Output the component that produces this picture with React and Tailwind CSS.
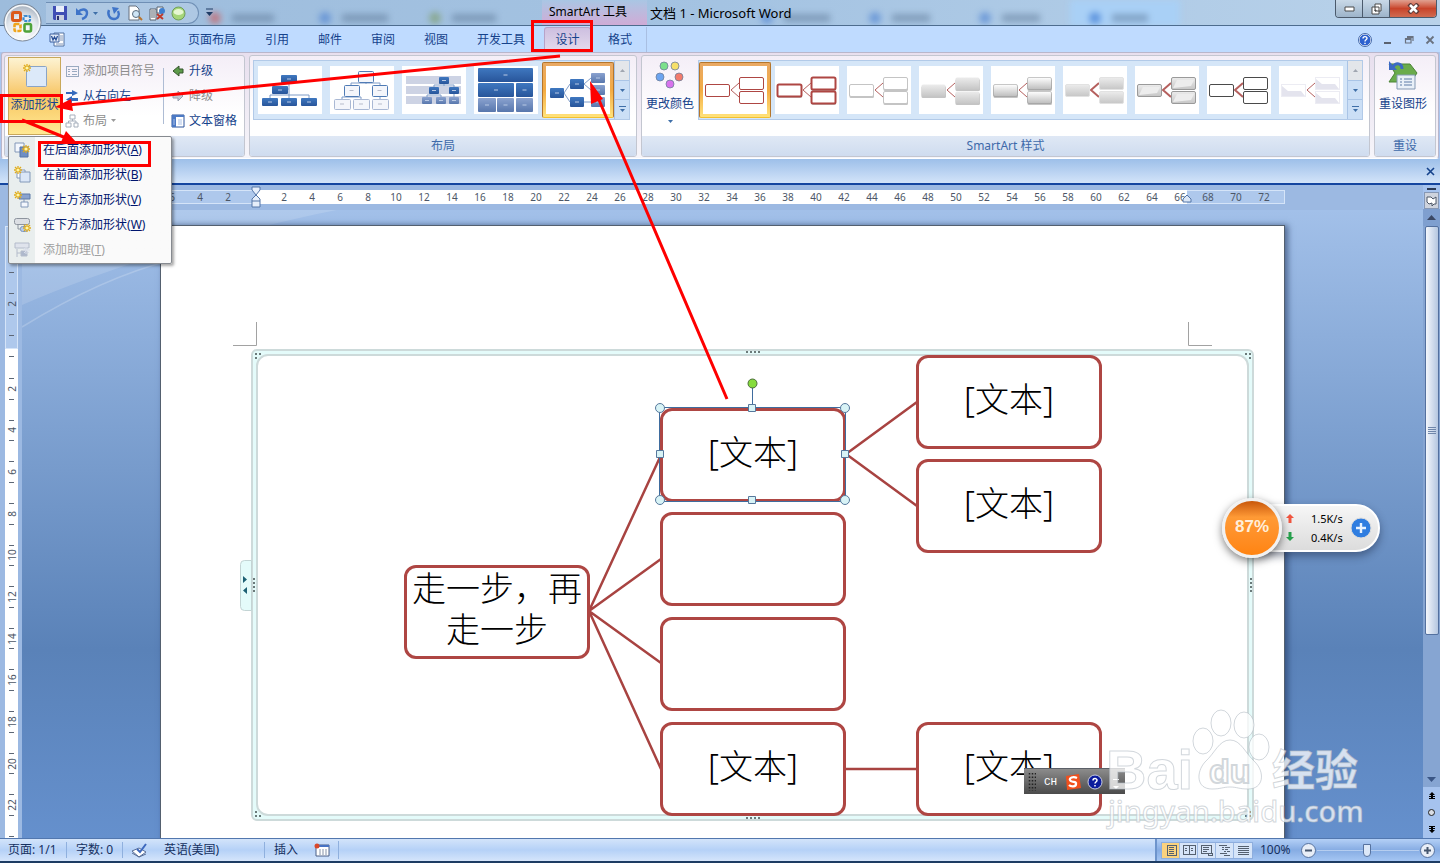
import { useState } from "react";

const ribbonTabs = ["开始", "插入", "页面布局", "引用", "邮件", "审阅", "视图", "开发工具"];

const blurredTabs = [
  { x: 208, color: "#d0504e", w: 42 },
  { x: 318, color: "#4a7fd0", w: 46 },
  { x: 428, color: "#7a9a60", w: 44 },
  { x: 760, color: "#4a7fd0", w: 46 },
  { x: 868, color: "#4a7fd0", w: 38 },
  { x: 978, color: "#4a7fd0", w: 38 },
  { x: 1088, color: "#2f6fd0", w: 36 },
];

const menuItems = [
  { text: "在后面添加形状", hotkey: "A", kind: "after" },
  { text: "在前面添加形状", hotkey: "B", kind: "before" },
  { text: "在上方添加形状", hotkey: "V", kind: "above" },
  { text: "在下方添加形状", hotkey: "W", kind: "below" },
  { text: "添加助理", hotkey: "T", kind: "assistant", disabled: true },
];

const layoutThumbs = [
  {
    lines: "M31 17V32M12 32V29H51V32M31 23H26",
    boxes: [
      [23, 9, 16, 8],
      [14, 20, 16, 8],
      [4, 32, 16, 8],
      [23, 32, 16, 8],
      [43, 32, 16, 8],
    ],
  },
  {
    outlined: true,
    lines: "M36 16V18M21 19V17H50V19M12 33V31H31V33M21 30V31M50 30V33",
    boxes: [
      [28, 5, 15, 11],
      [14, 19, 15, 11],
      [42, 19, 15, 11],
      [4, 33, 16, 10],
      [23, 33, 16, 10],
      [42, 33, 16, 10],
    ],
  },
  {
    bands: true,
    lines: "M42 18V20M32 21V19H52V21M25 31V29H39V31M52 28V31",
    boxes: [
      [37, 11, 10, 7],
      [27, 21, 10, 7],
      [47, 21, 10, 7],
      [20, 31, 10, 7, 1],
      [34, 31, 10, 7, 1],
      [47, 31, 10, 7, 1],
    ],
  },
  {
    lines: "",
    boxes: [
      [4, 2, 55, 14],
      [4, 17, 36, 14],
      [42, 17, 17, 14],
      [4, 32, 18, 14, 1],
      [23, 32, 17, 14, 1],
      [42, 32, 17, 14, 1],
    ],
  },
  {
    selected: true,
    lines: "M18 27L24 18M18 27L24 36M38 18L45 12M38 18L45 24M38 36H45",
    boxes: [
      [4, 22, 14, 10],
      [24, 13, 14, 10],
      [24, 31, 14, 10],
      [45, 7, 14, 10, 1],
      [45, 19, 14, 10, 1],
      [45, 31, 14, 10, 1],
    ],
  },
];

const styleThumbs = [
  { stroke: "#ae4643", fill: "#fff", width: 1, selected: true },
  { stroke: "#ae4643", fill: "#fff", width: 2, shadow: true },
  { stroke: "#c4c4c4", fill: "#fff", width: 1, shadow: true },
  { stroke: "none", fill: "url(#grey)", width: 0, shadow: true },
  { stroke: "#8e8e8e", fill: "url(#gloss)", width: 0.5, shadow: true },
  { stroke: "#e2e2e2", fill: "url(#grey)", width: 1, bold: true },
  { stroke: "#9a9a9a", fill: "url(#grey)", width: 1, bold: true, inner: true },
  { stroke: "#4a4a4a", fill: "#fff", width: 1, bold: true },
  { stroke: "#ececf3", fill: "#fff", width: 1, bevel: true },
];

const nodes = [
  { x: 243, y: 339, text: "走一步，再走一步" },
  { x: 499, y: 182, text: "[文本]", selected: true },
  { x: 499, y: 286, text: "" },
  { x: 499, y: 391, text: "" },
  { x: 499, y: 496, text: "[文本]" },
  { x: 755, y: 129, text: "[文本]" },
  { x: 755, y: 233, text: "[文本]" },
  { x: 755, y: 496, text: "[文本]" },
];

const rulerNumbers = Array.from({ length: 33 }, (_, i) => (i + 1) * 2);
const verticalNumbers = Array.from({ length: 11 }, (_, i) => (i + 1) * 2);

const Star = ({ x, y }) => (
  <g transform={`translate(${x} ${y})`}>
    <path d="M0 -4V4M-4 0H4M-3 -3L3 3M3 -3L-3 3" stroke="#e0ac1c" strokeWidth="1.3" />
    <circle r="1.6" fill="#fff6a8" />
  </g>
);

const Caret = ({ className = "fill-[#3f6fa8]" }) => (
  <svg width="5" height="3" viewBox="0 0 5 3" className={className}>
    <path d="M0 0H5L2.5 3Z" />
  </svg>
);

const OfficeButton = () => (
  <button aria-label="Office" className="absolute left-[3px] top-[3px] z-10">
    <svg width="39" height="39" viewBox="0 0 39 39">
      <defs>
        <radialGradient id="orb" cx="50%" cy="75%" r="70%">
          <stop offset="0" stopColor="#ffffff" />
          <stop offset="0.6" stopColor="#e3e8ee" />
          <stop offset="1" stopColor="#a9b3c0" />
        </radialGradient>
      </defs>
      <circle cx="19.5" cy="19.5" r="18.5" fill="url(#orb)" stroke="#7c8796" />
      <circle cx="19.5" cy="19.5" r="17" fill="none" stroke="#f7f9fb" strokeWidth="1.5" />
      <g fill="none" strokeWidth="3">
        <rect x="9.5" y="9.500" width="8" height="8" rx="1.500" stroke="#dc5a1a" />
        <rect x="20.500" y="13" width="6.500" height="5" rx="1" stroke="#3b8ad0" strokeWidth="2.200" strokeDasharray="3 1" />
        <rect x="11.500" y="21" width="6" height="7" rx="1" stroke="#efa51c" strokeWidth="2.600" strokeDasharray="4 1" />
        <rect x="21.500" y="21" width="6.500" height="7.500" rx="1.500" stroke="#4ea33a" strokeWidth="2.600" />
      </g>
    </svg>
  </button>
);

const QuickAccess = () => (
  <div className="ml-[46px] flex h-[22px] w-[153px] items-center rounded-r-full border border-l-0 border-[#6f8fb5] bg-[#b9cfe8]/60 pl-[6px]">
    <button aria-label="保存">
      <svg width="16" height="16" viewBox="0 0 16 16">
        <path d="M1 1H15V15H2L1 14Z" fill="#3f4db4" />
        <path d="M4 1H12V7H4Z" fill="#e9eefa" />
        <path d="M4 10H12V15H4Z" fill="#c9cfdf" />
        <path d="M5 11H7V15H5Z" fill="#2a3070" />
      </svg>
    </button>
    <button aria-label="撤销" className="ml-[7px]">
      <svg width="15" height="15" viewBox="0 0 15 15">
        <path d="M3 6C7 2 12 3 12 7C12 10 10 12 7 13" fill="none" stroke="#3f74c8" strokeWidth="2.4" />
        <path d="M1 2V9H8Z" fill="#3f74c8" />
      </svg>
    </button>
    <button aria-label="撤销列表" className="ml-[3px]">
      <Caret />
    </button>
    <button aria-label="重复" className="ml-[8px]">
      <svg width="15" height="15" viewBox="0 0 15 15">
        <path d="M3 4C1 9 4 13 8 13C12 13 14 9 12 5" fill="none" stroke="#3f74c8" strokeWidth="2.4" />
        <path d="M6 1L13 2L8 8Z" fill="#3f74c8" />
      </svg>
    </button>
    <button aria-label="打印预览" className="ml-[7px]">
      <svg width="15" height="16" viewBox="0 0 15 16">
        <path d="M1 1H8L11 4V15H1Z" fill="#fff" stroke="#66707e" />
        <circle cx="8" cy="9" r="3.5" fill="#cfe5f5" stroke="#5b6b7c" />
        <path d="M11 12L14 15" stroke="#b9752f" strokeWidth="2" />
      </svg>
    </button>
    <button aria-label="编辑" className="ml-[6px]">
      <svg width="17" height="16" viewBox="0 0 17 16">
        <path d="M1 4H7V15H1ZM8 2H14V8H8Z" fill="#fff" stroke="#59636f" />
        <path d="M2 6H6M2 8H6M2 10H6M2 12H6" stroke="#59636f" />
        <circle cx="13" cy="6" r="3" fill="#3f7fd0" />
        <path d="M8 9L14 14M14 9L8 14" stroke="#c03a2c" strokeWidth="2" />
      </svg>
    </button>
    <button aria-label="完成" className="ml-[5px]">
      <svg width="15" height="15" viewBox="0 0 15 15">
        <circle cx="7.5" cy="7.5" r="6.5" fill="#a6d67a" stroke="#6f9f58" />
        <ellipse cx="7.5" cy="6" rx="5" ry="3" fill="#e6f7d2" />
      </svg>
    </button>
  </div>
);

const TitleBar = () => (
  <header className="relative flex h-[26px] shrink-0 items-start overflow-hidden border-b border-[#4d6c8e] bg-linear-to-r from-[#9dbcdc] via-[#a4c3e2] to-[#b9d2ea] pt-[2px]">
    <div aria-hidden="true" className="absolute inset-0 blur-[3px]">
      <svg width="100%" height="26">
        <path d="M1070 0H1180V26H1070Z" fill="#a9d0f6" />
        {blurredTabs.map((tab) => (
          <g key={tab.x}>
            <circle cx={tab.x + 7} cy="18" r="6" fill={tab.color} opacity="0.6" />
            <path d={`M${tab.x + 24} 18h${tab.w}`} stroke="#55708f" strokeWidth="8" opacity="0.45" />
          </g>
        ))}
      </svg>
    </div>
    <QuickAccess />
    <button aria-label="自定义快速访问工具栏" className="relative ml-[7px] mt-[6px]">
      <svg width="7" height="8" viewBox="0 0 7 8">
        <path d="M0 1H7" stroke="#1e3c66" />
        <path d="M0 4H7L3.5 8Z" fill="#1e3c66" />
      </svg>
    </button>
    <div className="relative -mt-[2px] ml-[329px] h-[25px] w-[105px] bg-linear-to-b from-[#a9c6e4] to-[#cfabd6] pl-[7px] text-[12px] leading-6 whitespace-nowrap text-black">
      SmartArt 工具
    </div>
    <h1 className="relative -mt-[1px] ml-[3px] text-[13px] leading-6 whitespace-nowrap text-black">文档 1 - Microsoft Word</h1>
    <div className="relative -mt-[2px] mr-[3px] ml-auto flex h-[18px] overflow-hidden rounded-b-[4px] border border-t-0 border-[#4b5a6c]">
      <button aria-label="最小化" className="flex w-[27px] items-center justify-center border-r border-[#4b5a6c] bg-linear-to-b from-[#c9d9e8] to-[#9db4ca]">
        <svg width="11" height="6">
          <path d="M1 1H10V5H1Z" fill="#fff" stroke="#4a4a4a" />
        </svg>
      </button>
      <button aria-label="向下还原" className="flex w-[27px] items-center justify-center border-r border-[#4b5a6c] bg-linear-to-b from-[#c9d9e8] to-[#9db4ca]">
        <svg width="11" height="12">
          <path d="M4 1H10V8H4ZM1 4H8V11H1Z" fill="#fff" stroke="#4a4a4a" />
          <path d="M4 7H5V8H4Z" stroke="#4a4a4a" />
        </svg>
      </button>
      <button aria-label="关闭" className="flex w-[46px] items-center justify-center bg-linear-to-b from-[#e0a090] via-[#c8432a] to-[#d06a50]">
        <svg width="13" height="11" viewBox="0 0 13 11">
          <path d="M2 1L11 10M11 1L2 10" stroke="#5c3a38" strokeWidth="4.4" />
          <path d="M3 2L10 9M10 2L3 9" stroke="#fff" strokeWidth="2.6" />
        </svg>
      </button>
    </div>
  </header>
);

const TabRow = () => (
  <nav className="flex h-[26px] shrink-0 items-center bg-[#bfdbff] pt-[1px] text-[#15428b]">
    <a href="#word" aria-label="Word" className="ml-[49px]">
      <svg width="16" height="16" viewBox="0 0 16 16">
        <path d="M5 1H15V14H5Z" fill="#fff" stroke="#5070a0" />
        <path d="M11 4H14M11 6H14M11 8H14M7 12H14" stroke="#7f94b8" />
        <path d="M1 2H10V10H1Z" fill="#e3ecf8" stroke="#3a5f9e" />
        <path d="M2.500 4L4 8L5.500 5L7 8L8.500 4" fill="none" stroke="#2a4f96" strokeWidth="1.300" />
      </svg>
    </a>
    <div className="ml-[17px] flex gap-[29px]">
      {ribbonTabs.map((tab) => (
        <a key={tab} href="#tab" className="whitespace-nowrap">
          {tab}
        </a>
      ))}
    </div>
    <a href="#design" className="ml-[19px] flex h-[25px] w-[47px] items-center justify-center self-end rounded-t-[3px] border border-b-0 border-[#b7a3c9] bg-linear-to-b from-[#cdbfe0] to-[#e6dcec]">
      设计
    </a>
    <a href="#format" className="flex h-full w-[56px] items-center justify-end border-r border-[#a9bfe2] pr-[14px]">
      格式
    </a>
    <div className="mr-[5px] ml-auto flex items-center gap-[11px]">
      <button aria-label="帮助">
        <svg width="14" height="14" viewBox="0 0 14 14">
          <circle cx="7" cy="7" r="6" fill="#2f62cf" stroke="#fff" />
          <circle cx="7" cy="7" r="6.500" fill="none" stroke="#4468a8" />
          <path d="M5 5.500C5 3 9 3 9 5.200C9 6.800 7 6.600 7 8.500M7 9.800V11" fill="none" stroke="#fff" strokeWidth="1.400" />
        </svg>
      </button>
      <button aria-label="最小化文档">
        <svg width="10" height="10">
          <path d="M1 8H8" stroke="#5a6270" strokeWidth="2" />
        </svg>
      </button>
      <button aria-label="还原文档">
        <svg width="10" height="10">
          <path d="M3 1.500H9V6M1.500 3.500H7V8H1.500Z" fill="none" stroke="#6a7280" strokeWidth="1.200" />
          <path d="M1 4H7M3 2H9" stroke="#6a7280" strokeWidth="2" />
        </svg>
      </button>
      <button aria-label="关闭文档">
        <svg width="10" height="10">
          <path d="M1.500 1.500L8.500 8.500M8.500 1.500L1.500 8.500" stroke="#6a7280" strokeWidth="1.800" />
        </svg>
      </button>
    </div>
  </nav>
);

const RibbonGroup = ({ title, className, children }) => (
  <section className={`flex h-[102px] flex-col overflow-hidden rounded-[3px] border border-[#c3c6d0] bg-linear-to-b from-[#f4eef7] to-white to-60% ${className}`}>
    <div className="flex h-[80px]">{children}</div>
    <h2 className="flex flex-1 items-center justify-center bg-linear-to-b from-[#dfe8f5] to-[#cfdcef] text-[#3e6aaa]">{title}</h2>
  </section>
);

const LayoutThumb = ({ lines, boxes, bands, outlined }) => (
  <svg width="64" height="48" viewBox="0 0 64 48" className="bg-white">
    {bands && <path d="M4 10H59V18H4ZM4 20H59V28H4ZM4 30H59V38H4Z" fill="#cdd3e4" />}
    <path d={lines} fill="none" stroke="#7f9cc8" />
    {boxes.map(([x, y, w, h, pale]) => (
      <g key={`${x}-${y}`}>
        <rect
          x={outlined ? x + 0.5 : x}
          y={outlined ? y + 0.5 : y}
          width={w}
          height={h}
          rx="1"
          fill={outlined ? "#f4f6fb" : pale ? "url(#pale)" : "url(#blue)"}
          stroke={outlined ? (y > 30 ? "#a9b8d4" : "#4f7bb5") : "none"}
        />
        <path d={`M${x + w / 2 - 2} ${y + h / 2}h4`} stroke={outlined ? "#b7bccb" : "#b9c9e4"} />
      </g>
    ))}
  </svg>
);

const StyleThumb = ({ stroke, fill, width, shadow, bold, inner, bevel }) => {
  const boxes = [
    [2, 18],
    [36, 11],
    [36, 25],
  ];
  return (
    <svg width="64" height="48" viewBox="0 0 64 48" className="bg-white">
      <path d="M36 17L28 24L36 31" fill="none" stroke="#b5605e" strokeWidth={bold ? 2 : 1} />
      {boxes.map(([x, y]) => (
        <g key={`${x}-${y}`}>
          {shadow && <rect x={x + 0.5} y={y + 2} width="24.500" height="12" rx="1.500" fill="#c4c4c4" />}
          <rect x={x + 0.5} y={y + 0.5} width="24" height="12" rx={bevel ? 0 : 1.5} fill={fill} stroke={stroke} strokeWidth={width} />
          {inner && <path d={`M${x + 2} ${y + 11}L${x + 6} ${y + 3}H${x + 23}L${x + 20} ${y + 9}Z`} fill="#ededed" />}
          {bevel && <path d={`M${x + 1} ${y + 2}L${x + 7} ${y + 7}H${x + 20}L${x + 24} ${y + 12}H${x + 1}Z`} fill="#e4e4ee" />}
        </g>
      ))}
    </svg>
  );
};

const Gallery = ({ items, Thumb, name }) => {
  const [current, setCurrent] = useState(items.findIndex((item) => item.selected));
  return (
    <div className="mt-[4px] flex h-[60px] shrink-0 border border-[#b2cae8] bg-[#d5e6f8]">
      {items.map((item, i) => (
        <button key={i} aria-label={`${name} ${i + 1}`} onClick={() => setCurrent(i)} className="flex w-[72px] items-center justify-center">
          <span className={current === i ? "rounded-[2px] border border-[#b5762c] border-b-[#f2c02e] bg-linear-to-b from-[#e9a964] via-[#f3ab42] to-[#ffe27a] p-[3px]" : undefined}>
            <Thumb {...item} />
          </span>
        </button>
      ))}
      <div className="flex w-[15px] flex-col divide-y divide-[#a9c4e6] border-l border-[#a9c4e6]">
        <button aria-label="上一行" className="flex flex-1 items-center justify-center bg-[#e3e6ea]">
          <svg width="5" height="3" className="fill-[#a0a6b0]">
            <path d="M0 3H5L2.500 0Z" />
          </svg>
        </button>
        <button aria-label="下一行" className="flex flex-1 items-center justify-center bg-[#cbdff6]">
          <Caret />
        </button>
        <button aria-label="其他" className="flex flex-1 items-center justify-center bg-[#cbdff6]">
          <svg width="7" height="7" viewBox="0 0 7 7">
            <path d="M0 0.500H7" stroke="#3f6fa8" />
            <path d="M1 3H6L3.500 6Z" fill="#3f6fa8" />
          </svg>
        </button>
      </div>
    </div>
  );
};

const MenuIcon = ({ kind }) => (
  <svg width="18" height="18" viewBox="0 0 18 18">
    {kind === "after" && (
      <>
        <path d="M2 2H11V11H2Z" fill="#f3f7fd" stroke="#8298b8" />
        <path d="M7 6H15V16H7Z" fill="#6e8fc4" stroke="#5575a8" />
        <Star x={13} y={8} />
      </>
    )}
    {kind === "before" && (
      <>
        <path d="M4 4H12V12H4Z" fill="#fff" stroke="#8298b8" />
        <path d="M7 6H17V16H7Z" fill="#dbe7f7" stroke="#8298b8" />
        <Star x={5} y={4} />
      </>
    )}
    {kind === "above" && (
      <>
        <path d="M6 3H17V8H6Z" fill="#8aa3cf" stroke="#5f7aa8" />
        <path d="M11 8V11M8 11H15V16H8Z" fill="#f3f7fd" stroke="#8298b8" />
        <Star x={5} y={4} />
      </>
    )}
    {kind === "below" && (
      <>
        <rect x="1.500" y="2.500" width="15" height="6" rx="2" fill="#dcdfe4" stroke="#8d949e" />
        <path d="M5 9V13H8" fill="none" stroke="#8d949e" />
        <rect x="7.500" y="10.500" width="7" height="5" rx="2" fill="#b3c9ec" stroke="#7f97bd" />
        <Star x={14} y={12} />
      </>
    )}
    {kind === "assistant" && (
      <>
        <path d="M2 2H16V7H2Z" fill="#dfe3ec" stroke="#b4bccb" />
        <path d="M4 8V16M4 12H8M8 10H14V15H8Z" fill="#aeb8cc" stroke="#b4bccb" />
        <path d="M13 6V13M10 9H17M11 7L16 12M16 7L11 12" stroke="#d9deea" />
      </>
    )}
  </svg>
);

const ShapeMenu = () => (
  <ul role="menu" className="absolute top-[83px] left-[6px] z-20 w-[164px] rounded-[2px] border border-[#868a90] bg-linear-to-r from-[#e9eeee] from-[26px] to-[#fafafa] to-[26px] pb-[1px] shadow-[2px_2px_3px_rgba(0,0,0,0.35)]">
    {menuItems.map((item) => (
      <li key={item.kind} role="none">
        <button role="menuitem" disabled={item.disabled} className="flex h-[25px] w-full items-center gap-[12px] pl-[4px] text-[#00156e] disabled:text-[#a0a0a0]">
          <MenuIcon kind={item.kind} />
          <span className="whitespace-nowrap">
            {item.text}(<u>{item.hotkey}</u>)
          </span>
        </button>
      </li>
    ))}
  </ul>
);

const SmallButton = ({ icon, label, disabled, caret }) => (
  <button disabled={disabled} className="flex h-[25px] items-center gap-[4px] whitespace-nowrap text-[#15428b] disabled:text-[#8d8d8d]">
    <svg width="14" height="14" viewBox="0 0 14 14">
      {icon}
    </svg>
    {label}
    {caret && <Caret className="fill-[#9a9a9a]" />}
  </button>
);

const Ribbon = () => (
  <div className="relative mx-[1px] flex h-[107px] shrink-0 items-start gap-[4px] rounded-[3px] border border-[#b9b6cb] border-b-white bg-linear-to-b from-[#e8dfee] to-[#f6f5fa] px-[2px] pt-[2px]">
    <svg width="0" height="0" className="absolute">
      <defs>
        <linearGradient id="blue" x2="0" y2="1">
          <stop offset="0" stopColor="#3f78c0" />
          <stop offset="1" stopColor="#28559a" />
        </linearGradient>
        <linearGradient id="pale" x2="0" y2="1">
          <stop offset="0" stopColor="#8aa2cf" />
          <stop offset="1" stopColor="#5877ad" />
        </linearGradient>
        <linearGradient id="grey" x2="0" y2="1">
          <stop offset="0" stopColor="#ececec" />
          <stop offset="1" stopColor="#c6c6c6" />
        </linearGradient>
        <linearGradient id="gloss" x2="0" y2="1">
          <stop offset="0" stopColor="#fff" />
          <stop offset="1" stopColor="#bdbdbd" />
        </linearGradient>
      </defs>
    </svg>
    <RibbonGroup className="w-[241px] shrink-0">
      <button className="mt-[1px] ml-[3px] flex h-[78px] w-[53px] shrink-0 flex-col items-center border border-[#c9a85a] bg-linear-to-b from-[#fdf3d2] via-[#f7c560] to-[#ffe993] pt-[5px] text-[#15428b]">
        <svg width="26" height="26" viewBox="0 0 26 26">
          <rect x="4.500" y="3.500" width="20" height="20" rx="1" fill="#dce9f9" stroke="#8aa4c6" />
          <Star x={5} y={5} />
        </svg>
        <span className="mt-[8px] leading-4 whitespace-nowrap">添加形状</span>
        <span className="mt-[8px] flex">
          <Caret />
        </span>
      </button>
      <div className="mt-[2px] ml-[4px] flex w-[98px] flex-col">
        <SmallButton
          disabled
          label="添加项目符号"
          icon={<path d="M1 2H13V12H1ZM3 5H5M7 5H12M3 7H5M7 7H12M3 10H5M7 10H12" fill="none" stroke="#9aa9c0" shapeRendering="crispEdges" />}
        />
        <SmallButton
          label="从右向左"
          icon={
            <>
              <path d="M1 3H7V1L13 4L7 7V5H1Z" fill="#3569bd" />
              <path d="M13 9H7V7L1 10.500L7 14V12H13Z" fill="#3569bd" />
            </>
          }
        />
        <SmallButton
          disabled
          caret
          label="布局"
          icon={<path d="M5 1H10V5H5ZM1 9H6V13H1ZM9 9H13V13H9ZM7.500 5V7M3.500 9V7H11V9" fill="none" stroke="#a5aebb" />}
        />
      </div>
      <div className="mt-[12px] h-[56px] w-[1px] bg-[#aebcd4]" />
      <div className="mt-[2px] ml-[7px] flex flex-col">
        <SmallButton label="升级" icon={<path d="M2 7L8 2V5H12V9H8V12Z" fill="#5d9a4a" stroke="#35552c" />} />
        <SmallButton disabled label="降级" icon={<path d="M12 7L7 2V5H2V9H7V12Z" fill="#c5cad4" stroke="#98a0ae" />} />
        <SmallButton
          label="文本窗格"
          icon={
            <>
              <path d="M1 1H13V13H1Z" fill="#fff" stroke="#2d549c" />
              <path d="M1 1H13V3H1ZM1 3H5V13H1Z" fill="#4c79c4" />
              <path d="M2 6H4M2 8H4M2 10H4M7 6H11M7 8H11M7 10H11" stroke="#a9c0e6" />
            </>
          }
        />
      </div>
    </RibbonGroup>
    <RibbonGroup title="布局" className="w-[388px] shrink-0">
      <div className="ml-[3px]">
        <Gallery items={layoutThumbs} Thumb={LayoutThumb} name="布局" />
      </div>
    </RibbonGroup>
    <RibbonGroup title="SmartArt 样式" className="min-w-0 flex-1">
      <button className="mr-[3px] ml-[3px] flex w-[50px] shrink-0 flex-col items-center pt-[4px] text-[#15428b]">
        <svg width="30" height="30" viewBox="0 0 30 30">
          <g stroke="#6f7f9a" strokeWidth="0.800">
            <circle cx="9" cy="6" r="4" fill="#7be08a" />
            <circle cx="20" cy="6" r="4" fill="#f6e06a" />
            <circle cx="5" cy="17" r="4" fill="#6ba4f0" />
            <circle cx="24" cy="17" r="4" fill="#f27b6c" />
            <circle cx="15" cy="24" r="4" fill="#d873ec" />
          </g>
        </svg>
        <span className="mt-[6px] leading-4 whitespace-nowrap">更改颜色</span>
        <span className="mt-[8px] flex">
          <Caret />
        </span>
      </button>
      <Gallery items={styleThumbs} Thumb={StyleThumb} name="样式" />
    </RibbonGroup>
    <RibbonGroup title="重设" className="w-[62px] shrink-0">
      <button className="flex h-[57px] w-[56px] flex-col items-center pt-[4px] text-[#15428b]">
        <svg width="32" height="30" viewBox="0 0 32 30">
          <path d="M2 4H23L30 13L24 22H2L8 13Z" fill="#6aab4c" stroke="#4b8435" />
          <path d="M10 15H28V29H10Z" fill="#e9f0f8" stroke="#8499b4" />
          <path d="M13 19H15M17 19H25M13 22H15M17 22H25M13 25H15M17 25H25" stroke="#5d7ba6" />
          <path d="M6 7C9 2 15 3 15 9" fill="none" stroke="#3b69c4" strokeWidth="3" />
          <path d="M2 1V10H10Z" fill="#3b69c4" />
        </svg>
        <span className="mt-[6px] leading-4 whitespace-nowrap">重设图形</span>
      </button>
    </RibbonGroup>
    <ShapeMenu />
  </div>
);

const HorizontalRuler = () => (
  <div className="flex h-[25px] justify-center overflow-hidden bg-[#9cb9e2] pt-[5px]">
    <div className="flex h-[19px] w-[1125px] shrink-0 text-[10px] leading-3 text-[#4c5666]">
      <div className="flex h-[14px] w-[96px] shrink-0 justify-end border-y border-[#d5e4f8] bg-[#aec8ec] pr-[14px]">
        {[6, 4, 2].map((n) => (
          <span key={n} className="w-[28px] shrink-0 text-center">
            {n}
          </span>
        ))}
      </div>
      <div className="relative flex h-[14px] w-[931px] shrink-0 bg-white pt-[1px] pl-[14px]">
        {rulerNumbers.map((n) => (
          <span key={n} className="flex w-[28px] shrink-0 flex-col items-center">
            {n}
            <i className="mt-[2px] h-[3px] w-[1px] bg-[#707a88]" />
          </span>
        ))}
        <svg width="10" height="22" viewBox="0 0 10 22" className="absolute -top-[4px] -left-[5px]">
          <path d="M1 1H9V4L5 9L9 13V21H1V13L5 9L1 4ZM1 15H9" fill="#e6eefa" stroke="#5576a8" />
        </svg>
        <svg width="10" height="9" viewBox="0 0 10 9" className="absolute -right-[5px] top-[4px]">
          <path d="M1 8V5L5 1L9 5V8Z" fill="#dbe7f7" stroke="#5576a8" />
        </svg>
      </div>
      <div className="flex h-[14px] w-[98px] shrink-0 border border-l-0 border-[#d5e4f8] bg-[#aec8ec] pl-[7px]">
        {[68, 70, 72].map((n) => (
          <span key={n} className="w-[28px] shrink-0 text-center">
            {n}
          </span>
        ))}
      </div>
    </div>
  </div>
);

const RulerDash = () => <i className="h-[1px] w-[5px] bg-[#5c6675]" />;

const VerticalRuler = () => (
  <div className="flex w-[22px] shrink-0 flex-col overflow-hidden bg-[#9cb9e2] px-[5px] text-[10px] leading-3 text-[#4c5666]">
    <div className="mt-[41px] flex h-[123px] w-[13px] shrink-0 flex-col items-center justify-end gap-[20px] border border-[#d5e4f8] bg-[#aec8ec] pb-[12px]">
      <RulerDash />
      <div className="flex flex-col items-center gap-[4px]">
        <RulerDash />
        <span className="-rotate-90">2</span>
        <RulerDash />
      </div>
      <RulerDash />
    </div>
    <div className="flex w-[13px] flex-1 flex-col items-center bg-white pt-[7px]">
      <RulerDash />
      <div className="mt-[11px] flex h-[458px] shrink-0 flex-col">
        {verticalNumbers.map((n) => (
          <div key={n} className="flex flex-1 flex-col items-center justify-between py-[10px]">
            <RulerDash />
            <span className="-rotate-90">{n}</span>
            <RulerDash />
          </div>
        ))}
      </div>
      <div className="mt-[10px] flex">
        <RulerDash />
      </div>
    </div>
  </div>
);

const SelectionHandles = () => (
  <svg width="206" height="130" viewBox="0 0 206 130" className="absolute -top-[36px] -left-[13px]">
    <path d="M9.500 32.500H195.500V126.500H9.500ZM102.500 33V8" fill="none" stroke="#3f6c9e" />
    <g fill="#d8f3f6" stroke="#56789c">
      <circle cx="10" cy="33" r="4.500" />
      <circle cx="195" cy="33" r="4.500" />
      <circle cx="10" cy="125" r="4.500" />
      <circle cx="195" cy="125" r="4.500" />
      <path d="M98.500 29.500H105.500V36.500H98.500ZM98.500 121.500H105.500V128.500H98.500ZM6.500 75.500H13.500V82.500H6.500ZM191.500 75.500H198.500V82.500H191.500Z" />
    </g>
    <circle cx="102.500" cy="8.500" r="4.500" fill="#86dc3c" stroke="#4a6a3a" />
  </svg>
);

const DocumentPage = () => (
  <main className="relative h-[900px] w-[1125px] shrink-0 border border-[#54606f] bg-white shadow-[3px_0_6px_rgba(30,50,90,0.6)]">
    <svg width="1123" height="130" className="absolute top-0 left-0">
      <path d="M72 119.500H95.500V96M1051 119.500H1027.500V96" fill="none" stroke="#a2a2a2" />
    </svg>
    <div className="absolute top-[123px] left-[90px] h-[472px] w-[1003px] rounded-[6px] border-2 border-[#cddada] bg-[#e4fbfa] p-[3px]">
      <div className="h-full rounded-[12px] border-2 border-[#cddada] bg-white" />
    </div>
    <svg width="1123" height="612" className="absolute top-0 left-0">
      <path d="M79.500 338.500Q79.500 334.500 83.500 334.500H90.500V384.500H83.500Q79.500 384.500 79.500 380.500Z" fill="#e4fbfa" stroke="#c3d4d4" />
      <path d="M82 350L86 353.500L82 357ZM86 361L82 364.500L86 368Z" fill="#1d6074" />
      <g stroke="#6b7a7a" strokeWidth="2" strokeDasharray="2 2">
        <path d="M585 126H600M585 592H600M93 352V366M1090 352V366" />
        <path d="M94 128H100M94 132H96M1084 128H1090M1088 132H1090M94 590H100M94 586H96M1084 590H1090M1088 586H1090" />
      </g>
      <g stroke="#a84341" strokeWidth="2.500" fill="none">
        <path d="M428 385L500 229M428 385L500 333M428 385L500 437M428 385L500 543M685 228L756 176M685 228L756 280M685 543H756" />
      </g>
    </svg>
    {nodes.map((node) => (
      <div
        key={`${node.x}-${node.y}`}
        className="absolute flex h-[94px] w-[186px] items-center justify-center rounded-[12px] border-[3px] border-[#ae4643] bg-white pb-[6px] text-center text-[34px] leading-[41px] font-light text-black"
        style={{ left: node.x, top: node.y }}
      >
        {node.text}
        {node.selected && <SelectionHandles />}
      </div>
    ))}
  </main>
);

const ScrollBar = () => (
  <div className="flex w-[17px] shrink-0 flex-col items-center bg-[#a6c3ee]">
    <i className="mt-[3px] h-[2px] w-[9px] bg-[#2c3a55]" />
    <button aria-label="标尺" className="mt-[2px] flex h-[17px] w-[15px] items-center justify-center border border-[#8798b4] bg-[#ced3dd]">
      <svg width="12" height="12" viewBox="0 0 12 12">
        <path d="M1 2H5L7 4L10 2V9H8L6 11V8L3 9L1 7Z" fill="#fff" stroke="#4c5666" />
      </svg>
    </button>
    <button aria-label="向上滚动" className="flex h-[17px] w-full items-center justify-center bg-[#7f9fcf]">
      <svg width="9" height="5" className="fill-[#3a4763]">
        <path d="M0 5H9L4.500 0Z" />
      </svg>
    </button>
    <div className="flex w-full flex-1 flex-col items-center bg-[#86a5d2]">
      <div className="flex h-[75%] w-[14px] flex-col items-center justify-center gap-[1px] rounded-[2px] border border-[#53709f] bg-linear-to-r from-[#f4f7fc] to-[#b4c6e0]">
        <i className="h-[1px] w-[8px] bg-[#6f86aa]" />
        <i className="h-[1px] w-[8px] bg-[#6f86aa]" />
        <i className="h-[1px] w-[8px] bg-[#6f86aa]" />
        <i className="h-[1px] w-[8px] bg-[#6f86aa]" />
      </div>
    </div>
    <button aria-label="向下滚动" className="flex h-[16px] w-full items-center justify-center bg-[#86a5d2]">
      <svg width="9" height="5" className="fill-[#3a5685]">
        <path d="M0 0H9L4.500 5Z" />
      </svg>
    </button>
    <div className="flex h-[51px] flex-col items-center justify-around">
      <button aria-label="前一页">
        <svg width="6" height="7" className="block">
          <path d="M0 3L3 0L6 3ZM2 3H4V6H2ZM0 6H6V7H0ZM0 4H6V5H0Z" />
        </svg>
      </button>
      <button aria-label="选择浏览对象">
        <svg width="7" height="7" className="block">
          <circle cx="3.500" cy="3.500" r="3" fill="#d9dde4" stroke="#222" />
        </svg>
      </button>
      <button aria-label="下一页">
        <svg width="6" height="7" className="block">
          <path d="M0 4L3 7L6 4ZM2 1H4V4H2ZM0 0H6V1H0ZM0 2H6V3H0Z" />
        </svg>
      </button>
    </div>
  </div>
);

const Workspace = () => (
  <div className="flex min-h-0 flex-1">
    <div className="flex min-w-0 flex-1">
      <VerticalRuler />
      <div className="flex min-w-0 flex-1 flex-col">
        <HorizontalRuler />
        <div className="relative flex min-h-0 flex-1 justify-center overflow-hidden bg-linear-to-b from-[#a2c0e9] via-[#5a82b8] via-70% to-[#6590cd] pt-[15px]">
          <svg width="500" height="140" className="absolute top-0 left-0">
            <path d="M0 0H315C190 25 80 60 0 95Z" fill="#fff" opacity="0.14" />
            <path d="M0 117C60 80 110 60 150 50" fill="none" stroke="#fff" strokeWidth="1.500" opacity="0.200" />
          </svg>
          <DocumentPage />
        </div>
      </div>
    </div>
    <ScrollBar />
  </div>
);

const StatusBar = () => (
  <footer className="flex h-[23px] shrink-0 items-center border-t border-[#5277ae] bg-linear-to-b from-[#d3e4fa] via-[#b5d1f7] to-[#d5e5fb] whitespace-nowrap text-[#15305f]">
    <span className="w-[67px] border-r border-[#8fb0de] pl-[8px]">页面: 1/1</span>
    <span className="w-[56px] border-r border-[#8fb0de] pl-[9px]">字数: 0</span>
    <button aria-label="校对" className="ml-[8px]">
      <svg width="17" height="16" viewBox="0 0 17 16">
        <path d="M1 9L8 6L15 10L8 15Z" fill="#fff" stroke="#5a6f96" />
        <path d="M1 11L8 15L15 12" fill="none" stroke="#5a6f96" />
        <path d="M6 7L9 10L15 2" fill="none" stroke="#3d68bd" strokeWidth="2" />
      </svg>
    </button>
    <span className="ml-[16px] w-[101px] border-r border-[#8fb0de]">英语(美国)</span>
    <span className="ml-[9px]">插入</span>
    <button aria-label="录制宏" className="ml-[16px]">
      <svg width="16" height="14" viewBox="0 0 16 14">
        <path d="M2 2H15V13H2Z" fill="#fff" stroke="#4a5f86" />
        <path d="M2 2H15V4H2Z" fill="#4773c4" />
        <path d="M5 7H7M8 7H10M11 7H13M5 9H7M8 9H10M11 9H13M5 11H7M8 11H10M11 11H13" stroke="#8592a8" />
        <circle cx="3" cy="3" r="2.500" fill="#d9482b" />
      </svg>
    </button>
    <i className="ml-[8px] h-[18px] w-[1px] bg-[#8fb0de]" />
    <div className="ml-auto flex h-full items-center border-l-2 border-[#6d94cc] bg-linear-to-b from-[#b4d0f6] via-[#86ace3] to-[#a5c6f3] pl-[4px]">
      <div className="flex h-[17px] divide-x divide-[#9bb8e2] border border-[#8eaede] bg-[#d6e5f9]">
        {[
          "M3 2H12V12H3ZM5 4H10M5 6H10M5 8H10M5 10H10",
          "M1 2H6L7 3L8 2H13V11H8L7 12L6 11H1ZM7 3V12M3 5H5M3 7H5M9 5H11M9 7H11",
          "M1 2H11V10H1ZM3 4H9M3 6H9M3 8H7M8 10H12V12H8Z",
          "M1 2H9M4 4H6M7 4H12M4 6H6M7 6H10M6 8H8M9 8H12M2 10H9M6 12H12",
          "M2 3H13M2 5H13M2 7H13M2 9H13M2 11H13",
        ].map((d, i) => (
          <button key={d} aria-label={`视图 ${i + 1}`} className={i === 0 ? "flex w-[18px] items-center justify-center bg-[#fbd27e]" : "flex w-[18px] items-center justify-center"}>
            <svg width="14" height="14" viewBox="0 0 14 14" shapeRendering="crispEdges">
              <path d={d} fill="none" stroke="#54606f" />
            </svg>
          </button>
        ))}
      </div>
      <button className="ml-[7px] w-[34px] text-left">100%</button>
      <button aria-label="缩小" className="ml-[6px]">
        <svg width="17" height="17" viewBox="0 0 17 17">
          <circle cx="8.500" cy="8.500" r="7" fill="#e8eef7" stroke="#56729f" />
          <path d="M5 8.500H12" stroke="#46576f" strokeWidth="2" />
        </svg>
      </button>
      <input
        type="range"
        aria-label="显示比例"
        defaultValue="49"
        className="h-[15px] w-[102px] appearance-none bg-linear-to-b from-transparent from-[7px] via-[#e4eefb] via-[7px] to-transparent to-[8px] [&::-webkit-slider-thumb]:h-[13px] [&::-webkit-slider-thumb]:w-[8px] [&::-webkit-slider-thumb]:appearance-none [&::-webkit-slider-thumb]:rounded-b-[4px] [&::-webkit-slider-thumb]:border [&::-webkit-slider-thumb]:border-[#56729f] [&::-webkit-slider-thumb]:bg-[#dce8f8]"
      />
      <button aria-label="放大" className="mr-[4px]">
        <svg width="17" height="17" viewBox="0 0 17 17">
          <circle cx="8.500" cy="8.500" r="7" fill="#e8eef7" stroke="#56729f" />
          <path d="M5 8.500H12M8.500 5V12" stroke="#46576f" strokeWidth="2" />
        </svg>
      </button>
    </div>
  </footer>
);

const SpeedBall = () => (
  <aside className="absolute top-[498px] right-[60px] flex h-[60px] w-[158px] items-center text-[11px] text-black">
    <div className="ml-[20px] flex h-[48px] flex-1 items-center rounded-full border-2 border-white bg-linear-to-b from-[#f6f6f6] to-[#dcdcdc] pl-[42px] shadow-[0_4px_8px_rgba(20,30,60,0.45)]">
      <svg width="8" height="30" viewBox="0 0 8 30">
        <path d="M4 1L8 5H5.500V10H2.500V5H0Z" fill="#f0553f" />
        <path d="M4 28L0 24H2.500V19H5.500V24H8Z" fill="#27a04c" />
      </svg>
      <div className="ml-[17px] flex flex-col leading-[19px]">
        <span>1.5K/s</span>
        <span>0.4K/s</span>
      </div>
      <button aria-label="加速" className="ml-auto mr-[6px]">
        <svg width="22" height="22" viewBox="0 0 22 22">
          <circle cx="11" cy="11" r="10" fill="#2f7de0" stroke="#dcdcdc" />
          <path d="M11 6V16M6 11H16" stroke="#e8f2ff" strokeWidth="2.400" />
        </svg>
      </button>
    </div>
    <div className="absolute top-0 left-0 flex h-[60px] w-[60px] items-center justify-center rounded-full border-[3px] border-[#f1f1f1] bg-linear-to-b from-[#c85708] via-[#ff9a35] via-30% to-[#ff8410] pb-[2px] font-['Liberation_Sans'] text-[17px] font-bold text-[#ffeeda] shadow-[0_3px_8px_rgba(0,0,0,0.5)]">
      87%
    </div>
  </aside>
);

const InputMethodBar = () => (
  <div className="absolute top-[768px] right-[315px] flex h-[26px] w-[101px] items-center border-t border-[#5b6068] bg-linear-to-b from-[#8c8c8c] to-[#4b4b4b] pl-[4px] text-white">
    <svg width="8" height="18">
      <path d="M1.500 0V18M4.500 0V18M7.500 0V18" stroke="#222" strokeWidth="1.500" strokeDasharray="1.500 2" />
    </svg>
    <span className="ml-[8px] font-['Liberation_Mono'] text-[11px]">CH</span>
    <svg width="18" height="18" viewBox="0 0 18 18" className="ml-[7px]">
      <path d="M2 3L15 1L17 15L3 17Z" fill="#f1501d" />
      <path d="M13 5C9 3 5 5 6 7C7 10 13 8 12 11C12 14 7 14 5 12" fill="none" stroke="#fff" strokeWidth="2.300" />
    </svg>
    <svg width="16" height="16" viewBox="0 0 16 16" className="ml-[5px]">
      <circle cx="8" cy="8" r="7" fill="#0c1c9c" stroke="#c8cde0" />
      <path d="M6 6.500C6 4 10 4 10 6.300C10 8 8 8 8 9.500M8 11V12.500" fill="none" stroke="#fff" strokeWidth="1.500" />
    </svg>
    <svg width="8" height="18" viewBox="0 0 8 18" className="ml-auto mr-[5px]">
      <path d="M1 6H7V7H1ZM1 13H7L4 16Z" fill="#fff" />
    </svg>
  </div>
);

const Watermark = () => (
  <svg width="270" height="130" viewBox="0 0 270 130" className="pointer-events-none absolute top-[703px] right-[68px]">
    <g fill="#fff" fillOpacity="0.750" stroke="#b4bcc4" strokeOpacity="0.600">
      <text x="4" y="86" fontSize="56" fontWeight="700" className="font-['Liberation_Sans']">
        Bai
      </text>
      <ellipse cx="101" cy="38" rx="10" ry="13" />
      <ellipse cx="119" cy="20" rx="10" ry="13" />
      <ellipse cx="142" cy="22" rx="10" ry="13" />
      <ellipse cx="157" cy="44" rx="10" ry="13" />
      <path d="M128 37C139 37 143 50 153 59C163 69 162 86 146 86C137 86 135 84 128 84C121 84 119 86 110 86C94 86 94 69 103 59C113 50 117 37 128 37Z" />
      <text x="170" y="83" fontSize="43" fontWeight="700">
        经验
      </text>
      <text x="6" y="119" fontSize="29" fontWeight="500">
        jingyan.baidu.com
      </text>
      <text x="107" y="80" fontSize="34" fontWeight="700" strokeWidth="2" className="font-['Liberation_Sans']">
        du
      </text>
    </g>
  </svg>
);

const Annotations = () => (
  <svg width="800" height="420" className="pointer-events-none absolute top-0 left-0 z-30">
    <g fill="none" stroke="#fe0000" strokeWidth="3">
      <path d="M1.500 95.500H61.500V121.500H1.500ZM532.500 21.500H591.500V50.500H532.500ZM39.500 142.500H149.500V165.500H39.500Z" />
      <path d="M560 56L68 105M22 120L66 138M727 399L596 93" />
    </g>
    <path d="M55 107L71 99L73 111ZM77 143L61 142L66 131ZM590 81L603 99L591 104Z" fill="#fe0000" />
  </svg>
);

const App = () => {
  return (
    <div className="relative flex h-screen flex-col overflow-hidden bg-[#a9c6ef] font-['Noto_Sans','Noto_Sans_CJK_SC',sans-serif] text-[12px] leading-4">
      <OfficeButton />
      <TitleBar />
      <TabRow />
      <Ribbon />
      <div className="flex h-[26px] shrink-0 items-center justify-end border-b-2 border-[#1546a0] bg-linear-to-b from-[#9dbfe9] to-[#d3e4f9] pr-[5px]">
        <button aria-label="关闭选项卡">
          <svg width="9" height="9" viewBox="0 0 9 9">
            <path d="M1 1L8 8M8 1L1 8" stroke="#15428b" strokeWidth="1.600" />
          </svg>
        </button>
      </div>
      <Workspace />
      <StatusBar />
      <div className="h-[2px] shrink-0 bg-[#1d3c63]" />
      <SpeedBall />
      <InputMethodBar />
      <Watermark />
      <Annotations />
    </div>
  );
};

export default App;
